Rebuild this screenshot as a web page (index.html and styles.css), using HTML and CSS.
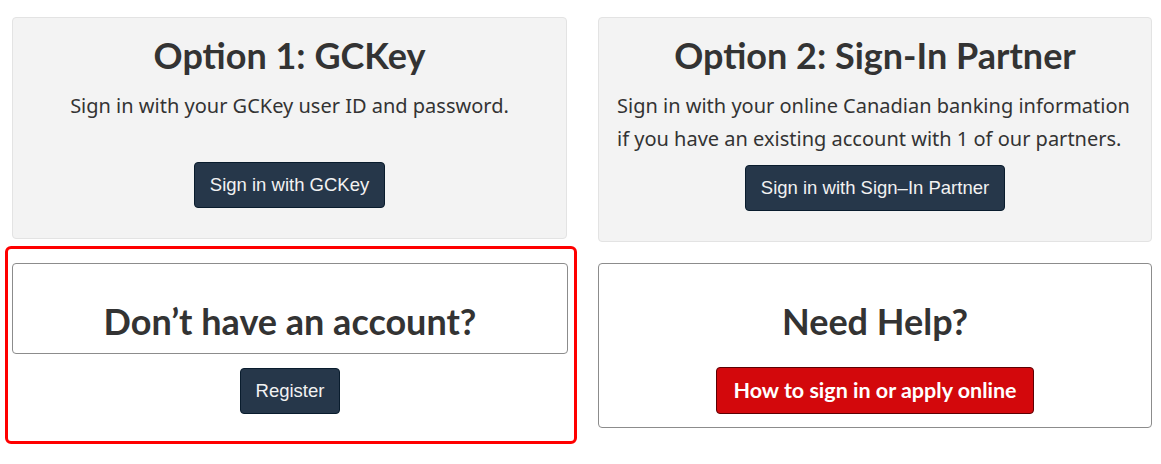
FILE: index.html
```html
<!DOCTYPE html>
<html>
<head>
    <title>Sign in</title>
    <link rel="stylesheet" href="styles.css">
</head>
<body>
    <div class="options">
        <section class="panel panel-grey">
            <h2>Option 1: GCKey</h2>
            <p class="lead lead-short">Sign in with your GCKey user ID and password.</p>
            <a class="btn btn-primary" href="#">Sign in with GCKey</a>
        </section>

        <section class="panel panel-grey">
            <h2>Option 2: Sign-In Partner</h2>
            <p class="lead lead-left">Sign in with your online Canadian banking information if you have an existing account with 1 of our partners.</p>
            <a class="btn btn-primary" href="#">Sign in with Sign–In Partner</a>
        </section>

        <div class="highlight">
            <section class="panel panel-line panel-short">
                <h2>Don’t have an account?</h2>
            </section>
            <a class="btn btn-primary btn-register" href="#">Register</a>
        </div>

        <section class="panel panel-line panel-help">
            <h2>Need Help?</h2>
            <a class="btn btn-danger" href="#">How to sign in or apply online</a>
        </section>
    </div>
</body>
</html>
```

FILE: styles.css
```css
body {
    margin: 0;
    background: #fff;
    color: #333;
    font-family: "Noto Sans", sans-serif;
}

.options {
    display: grid;
    grid-template-columns: 555px 554px;
    column-gap: 31px;
    row-gap: 4px;
    align-items: start;
    padding: 17px 0 0 12px;
}

.panel {
    box-sizing: border-box;
    border-radius: 4px;
    text-align: center;
}
.panel-grey {
    background: #f3f3f3;
    border: 1px solid #e3e3e3;
    padding: 18px 8px 30px;
}
.panel-line {
    background: #fff;
    border: 1px solid #8c8c8c;
}

h2 {
    font-family: Lato, sans-serif;
    font-weight: 700;
    font-size: 36px;
    line-height: 1.1;
    margin: 0;
}

.lead {
    font-size: 20px;
    line-height: 33px;
    margin: 13px 0 10px;
}
.lead-short { margin-bottom: 40px; }
.lead-left {
    text-align: left;
    padding: 0 10px;
}

.btn {
    display: inline-block;
    box-sizing: border-box;
    height: 46px;
    padding: 0 15px;
    border-radius: 4px;
    border: 1px solid #091c2d;
    text-decoration: none;
    font-family: "Liberation Sans", Arial, sans-serif;
    font-size: 18.5px;
    line-height: 44px;
}
.btn-primary {
    background: #26374a;
    color: #f2f2f2;
}
.btn-danger {
    height: 47px;
    padding: 0 16px;
    background: #d3080c;
    border-color: #5c0003;
    color: #fff;
    font-family: Lato, sans-serif;
    font-weight: 700;
    font-size: 21.5px;
}

.highlight {
    margin: 0 -10px 0 -7px;
    border: 3px solid #ff0000;
    border-radius: 6px;
    padding: 14px 6px 27px 4px;
    text-align: center;
}
.panel-short {
    height: 91px;
    padding-top: 38px;
    margin-bottom: 14px;
}

.panel-help {
    margin-top: 17px;
    height: 165px;
    padding-top: 38px;
}
.panel-help h2 { margin-bottom: 26px; }
```
